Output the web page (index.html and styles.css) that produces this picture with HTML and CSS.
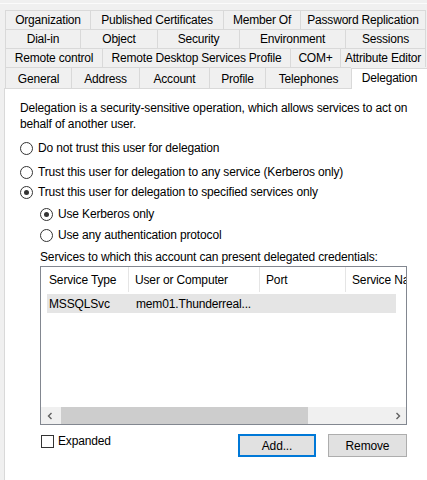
FILE: index.html
```html
<!DOCTYPE html>
<html>
<head>
<meta charset="utf-8">
<link rel="stylesheet" href="styles.css">
</head>
<body>
<div class="window">
  <div class="topline"></div>
  <div class="tabs">
    <div class="row">
      <div class="tab t-org">Organization</div>
      <div class="tab t-pub">Published Certificates</div>
      <div class="tab t-mem">Member Of</div>
      <div class="tab t-pwd">Password Replication</div>
    </div>
    <div class="row">
      <div class="tab t-dial">Dial-in</div>
      <div class="tab t-obj">Object</div>
      <div class="tab t-sec">Security</div>
      <div class="tab t-env">Environment</div>
      <div class="tab t-ses">Sessions</div>
    </div>
    <div class="row">
      <div class="tab t-rc">Remote control</div>
      <div class="tab t-rds">Remote Desktop Services Profile</div>
      <div class="tab t-com">COM+</div>
      <div class="tab t-attr">Attribute Editor</div>
    </div>
    <div class="row last">
      <div class="tab t-gen">General</div>
      <div class="tab t-addr">Address</div>
      <div class="tab t-acc">Account</div>
      <div class="tab t-prof">Profile</div>
      <div class="tab t-tel">Telephones</div>
      <div class="tab t-del selected">Delegation</div>
    </div>
  </div>
  <div class="panel">
    <p class="intro">Delegation is a security-sensitive operation, which allows services to act on behalf of another user.</p>
    <div class="opt o1"><span class="radio"></span><span>Do not trust this user for delegation</span></div>
    <div class="opt o2"><span class="radio"></span><span>Trust this user for delegation to any service (Kerberos only)</span></div>
    <div class="opt o3"><span class="radio on"></span><span>Trust this user for delegation to specified services only</span></div>
    <div class="sub">
      <div class="opt s1"><span class="radio on"></span><span>Use Kerberos only</span></div>
      <div class="opt s2"><span class="radio"></span><span>Use any authentication protocol</span></div>
      <div class="label">Services to which this account can present delegated credentials:</div>
      <div class="listbox">
        <div class="lv-head">
          <div class="col c1">Service Type</div>
          <div class="col c2">User or Computer</div>
          <div class="col c3">Port</div>
          <div class="col c4">Service Na</div>
        </div>
        <div class="lv-row">
          <div class="cell c1">MSSQLSvc</div>
          <div class="cell c2">mem01.Thunderreal...</div>
        </div>
        <div class="lv-fill"></div>
        <div class="hscroll">
          <div class="arrow">
            <svg width="8" height="8" viewBox="0 0 8 8"><path d="M5.5 1 L2.5 4 L5.5 7" fill="none" stroke="#606060" stroke-width="1.4"/></svg>
          </div>
          <div class="track"><div class="thumb"></div></div>
          <div class="arrow">
            <svg width="8" height="8" viewBox="0 0 8 8"><path d="M2.5 1 L5.5 4 L2.5 7" fill="none" stroke="#606060" stroke-width="1.4"/></svg>
          </div>
        </div>
      </div>
      <div class="bottom">
        <div class="check"><span class="box"></span><span>Expanded</span></div>
        <div class="buttons">
          <div class="btn default">Add...</div>
          <div class="btn">Remove</div>
        </div>
      </div>
    </div>
  </div>
</div>
</body>
</html>
```

FILE: styles.css
```css
html, body {
  margin: 0;
  padding: 0;
  background: #f0f0f0;
}
body {
  width: 427px;
  height: 480px;
  overflow: hidden;
  font-family: "Liberation Sans", Arial, sans-serif;
  font-size: 12px;
  color: #000;
}
.window {
  padding-left: 4px;
  height: 480px;
  box-sizing: border-box;
  display: flex;
  flex-direction: column;
}
.topline {
  height: 3px;
  border-bottom: 1px solid #fbfbfb;
  margin-bottom: 6px;
  margin-left: -4px;
  flex: none;
}
.tabs {
  padding-left: 1px;
  flex: none;
}
.row {
  display: flex;
  height: 19px;
}
.row.last { height: 21px; align-items: flex-end; }
.tab {
  box-sizing: border-box;
  border: 1px solid #d9d9d9;
  border-bottom: none;
  border-right: none;
  background: #f0f0f0;
  display: flex;
  align-items: center;
  justify-content: center;
  height: 19px;
  white-space: nowrap;
  letter-spacing: -0.2px;
  flex: none;
}
.tab:last-child { border-right: 1px solid #d9d9d9; }
.row.last .tab { height: 21px; padding-top: 1px; }
.tab.selected {
  background: #fff;
  height: 23px;
  margin-bottom: -1px;
  padding-top: 0;
  padding-bottom: 3px;
  position: relative;
  z-index: 2;
}
.t-org { width: 85px; } .t-pub { width: 133px; } .t-mem { width: 77px; } .t-pwd { width: 126px; }
.t-dial { width: 75px; } .t-obj { width: 77px; } .t-sec { width: 82px; } .t-env { width: 106px; } .t-ses { width: 81px; }
.t-rc { width: 97px; } .t-rds { width: 188px; } .t-com { width: 50px; } .t-attr { width: 86px; }
.t-gen { width: 66px; } .t-addr { width: 68px; } .t-acc { width: 70px; } .t-prof { width: 56px; } .t-tel { width: 86px; } .t-del { width: 77px; }

.panel {
  background: #fff;
  border-left: 1px solid #d9d9d9;
  border-top: 1px solid #d9d9d9;
  margin-right: -10px;
  flex: 1;
  box-sizing: border-box;
  padding-left: 15px;
  letter-spacing: -0.15px;
}
.intro {
  margin: 11px 0 0 0;
  line-height: 16px;
  width: 404px;
}
.opt {
  display: flex;
  align-items: center;
  gap: 5px;
  height: 16px;
  white-space: nowrap;
}
.o1 { margin-top: 8px; }
.o2 { margin-top: 8px; }
.o3 { margin-top: 4px; }
.radio {
  width: 11px;
  height: 11px;
  border: 1px solid #333;
  border-radius: 50%;
  box-sizing: content-box;
  position: relative;
  flex: none;
}
.radio.on::after {
  content: "";
  position: absolute;
  left: 3px;
  top: 3px;
  width: 5px;
  height: 5px;
  border-radius: 50%;
  background: #333;
}
.sub {
  padding-left: 20px;
}
.s1 { margin-top: 6px; }
.s2 { margin-top: 5px; }
.label {
  margin-top: 6px;
  line-height: 16px;
  white-space: nowrap;
}
.listbox {
  margin-top: 1px;
  width: 367px;
  height: 159px;
  box-sizing: border-box;
  border: 1px solid #828790;
  display: flex;
  flex-direction: column;
  overflow: hidden;
}
.lv-head {
  display: flex;
  height: 25px;
  flex: none;
  padding-left: 2px;
}
.col {
  box-sizing: border-box;
  border-right: 1px solid #e5e5e5;
  display: flex;
  align-items: center;
  padding-left: 6px;
  white-space: nowrap;
  overflow: hidden;
  flex: none;
}
.c1 { width: 86px; }
.c2 { width: 131px; }
.c3 { width: 86px; }
.c4 { width: 70px; border-right: none; }
.lv-row {
  display: flex;
  height: 19px;
  margin-top: 2px;
  margin-left: 6px;
  margin-right: 10px;
  background: #e5e5e5;
  flex: none;
}
.cell {
  display: flex;
  align-items: center;
  padding-left: 2px;
  white-space: nowrap;
  box-sizing: border-box;
  flex: none;
}
.lv-row .c1 { width: 87px; }
.lv-fill { flex: 1; }
.hscroll {
  height: 17px;
  flex: none;
  display: flex;
  background: #f0f0f0;
}
.arrow {
  width: 17px;
  display: flex;
  align-items: center;
  justify-content: center;
  flex: none;
}
.track {
  flex: 1;
  display: flex;
  align-items: center;
}
.thumb {
  width: 247px;
  height: 17px;
  background: #cdcdcd;
  margin-left: 3px;
}
.bottom {
  display: flex;
  justify-content: space-between;
  width: 367px;
  margin-top: 9px;
}
.check {
  display: flex;
  align-items: center;
  gap: 4px;
  height: 14px;
  margin-left: 1px;
}
.box {
  width: 11px;
  height: 11px;
  border: 1px solid #333;
  background: #fff;
  flex: none;
}
.buttons {
  display: flex;
  gap: 12px;
}
.btn {
  width: 79px;
  height: 23px;
  box-sizing: border-box;
  border: 1px solid #adadad;
  background: #e1e1e1;
  display: flex;
  align-items: center;
  justify-content: center;
}
.btn.default {
  border: 2px solid #0078d7;
  width: 78px;
}
```
